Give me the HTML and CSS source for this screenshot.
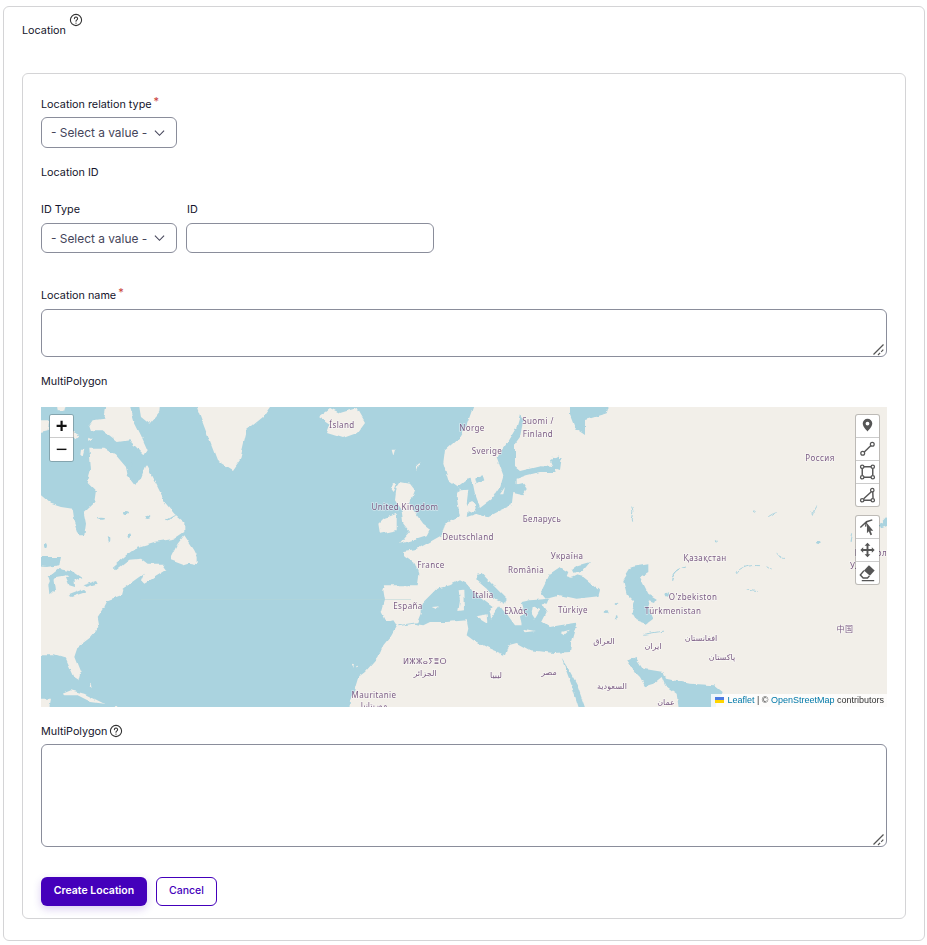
FILE: index.html
```html
<!DOCTYPE html>
<html lang="en">
<head>
<meta charset="utf-8">
<title>Location</title>
<link rel="stylesheet" href="styles.css">
</head>
<body>
<form class="outer">
  <div class="legend">
    <span class="legend-text">Location</span>
    <svg class="help help-top" viewBox="0 0 14 14"><circle cx="7" cy="7" r="5.6"/><path d="M5.4 5.6a1.6 1.6 0 1 1 2.5 1.3c-.6.4-.9.7-.9 1.3"/><path d="M7 10v.3"/></svg>
  </div>
  <div class="inner">
    <label class="lab">Location relation type<sup class="req">*</sup></label>
    <div class="select sel-a">
      <select><option>- Select a value -</option></select>
      <svg class="chev" viewBox="0 0 12 8"><path d="M1 1.5l5 5 5-5"/></svg>
    </div>
    <div class="lab lab-section">Location ID</div>
    <div class="id-row">
      <div class="id-col">
        <label class="lab">ID Type</label>
        <div class="select sel-b">
          <select><option>- Select a value -</option></select>
          <svg class="chev" viewBox="0 0 12 8"><path d="M1 1.5l5 5 5-5"/></svg>
        </div>
      </div>
      <div class="id-col">
        <label class="lab lab-id">ID</label>
        <input class="text" type="text">
      </div>
    </div>
    <label class="lab lab-name">Location name<sup class="req">*</sup></label>
    <div class="area-wrap area-name">
      <textarea class="area"></textarea>
      <svg class="grip" viewBox="0 0 16 16"><path d="M3.500 14.500L13.500 4.500"/><path d="M8 15l6-6" stroke-dasharray="3 1.500"/></svg>
    </div>
    <div class="lab lab-mp">MultiPolygon</div>

    <div class="map">
      <svg class="basemap" viewBox="0 0 846 300">
        <defs>
          <filter id="coast" filterUnits="userSpaceOnUse" x="-10" y="-10" width="866" height="320">
            <feTurbulence type="fractalNoise" baseFrequency=".11" numOctaves="3" seed="7" result="n"/>
            <feDisplacementMap in="SourceGraphic" in2="n" scale="4" xChannelSelector="R" yChannelSelector="G"/>
            <feGaussianBlur stdDeviation=".4"/>
          </filter>
        </defs>
        <rect class="water" width="846" height="300"/>
        <g filter="url(#coast)">
        <g transform="scale(.3333)">
          <path class="land" d="M-30,265L0,265 30,290 60,300 95,305 100,340 115,385 130,385 135,350 128,315 160,285 165,250 140,225 150,190 145,125 190,125 225,145 255,180 260,205 280,230 300,215 316,175 345,230 375,290 400,320 430,345 430,375 400,395 340,405 290,420 255,445 215,480 225,490 265,458 300,455 320,470 365,470 378,488 310,530 300,520 308,500 245,545 240,565 200,580 190,600 170,630 175,660 150,690 110,720 100,750 120,800 115,820 100,810 75,755 40,745 -30,745Z"/>
          <path class="land" d="M145,55L155,40 190,35 200,-30 260,-30 280,45 300,85 320,130 310,145 265,100 230,105 185,70 150,70Z"/>
          <path class="land" d="M290,-30L360,-30 355,15 325,50 300,30Z"/>
          <path class="land" d="M-30,40L25,40 20,70 -30,82Z"/>
          <path class="land" d="M45,-30L80,-30 70,14 50,12Z"/>
          <path class="land" d="M97,75L115,85 105,95 95,85Z"/>
          <path class="land" d="M120,125L130,125 125,146 118,140Z"/>
          <path class="land" d="M142,92L155,98 150,105 141,100Z"/>
          <path class="land" d="M390,450L410,410 430,385 460,430 470,450 470,475 445,470 430,475 390,460Z"/>
          <path class="land" d="M65,860L90,850 130,860 190,890 150,885 110,865 70,865Z"/>
          <path class="land" d="M205,930L225,893 250,930Z"/>
          <path class="land" d="M-30,875L30,875 20,930 -30,930Z"/>
          <path class="land" d="M145,825L150,830 152,842 146,838Z"/>
          <path class="water" d="M-30,450L60,450 55,475 20,480 -30,478Z"/>
          <path class="water" d="M20,510L50,485 100,495 122,510 105,518 75,505 45,510 30,525Z"/>
          <path class="water" d="M22,530L35,500 42,550 25,565Z"/>
          <path class="water" d="M75,510L100,505 102,540 85,535Z"/>
          <path class="water" d="M80,565L130,545 135,555 90,570Z"/>
          <path class="water" d="M125,535L165,522 170,530 135,540Z"/>
          <path class="water" d="M255,175L275,170 272,185 258,185Z"/>
          <path class="water" d="M375,340L410,320 405,325 380,345Z"/>
          <ellipse class="water" cx="255" cy="318" rx="9" ry="6"/>
          <ellipse class="water" cx="320" cy="328" rx="8" ry="5"/>
          <ellipse class="water" cx="180" cy="335" rx="12" ry="3"/>
          <ellipse class="water" cx="12" cy="416" rx="6" ry="8"/>
          <ellipse class="water" cx="205" cy="395" rx="3" ry="10"/>
          <ellipse class="water" cx="265" cy="385" rx="5" ry="6"/>
        </g>
        <g transform="translate(152,0) scale(.3333)">
          <path class="land" d="M0,-30L42,81 72,159 120,189 141,159 162,69 210,30 252,-30Z"/>
        </g>
        <path class="land" d="M277,10L289,1 299,6 316,1 324,15 316,26 302,31 286,26 289,18Z"/>
        <g transform="translate(319,0) scale(.3333)">
          <path class="land" d="M350,-30L320,55 300,90 255,130 250,170 265,220 290,238 300,245 290,270 295,300 300,330 255,350 245,385 200,410 165,430 130,435 130,445 135,450 165,470 175,500 170,535 75,535 70,550 75,580 65,615 80,645 100,640 110,655 90,690 70,715 55,750 15,795 -5,810 -20,860 -30,880 -35,950 1700,950 1700,-30Z"/>
          <path class="water" d="M290,238L320,215 335,212 345,260 360,300 400,270 420,240 430,205 410,150 440,110 470,60 480,25 490,40 480,90 465,110 465,180 480,192 540,178 585,180 590,195 540,195 500,205 470,215 470,235 490,230 500,245 490,262 460,255 455,295 420,310 380,330 350,320 320,330 325,300 320,290 325,248 305,250Z"/>
          <path class="land" d="M325,292L340,285 350,310 335,318 322,312Z"/>
          <path class="land" d="M420,262L435,240 430,262Z"/>
          <path class="water" d="M345,212L365,205 370,220 350,232Z"/>
          <path class="water" d="M570,160L595,145 600,185 580,186Z"/>
          <path class="land" d="M110,240L120,225 150,230 165,250 150,290 160,310 190,350 210,365 200,385 120,410 150,375 130,350 125,310 105,280Z"/>
          <path class="land" d="M70,335L110,320 110,370 60,380 55,350Z"/>
          <path class="land" d="M95,128L105,128 100,146Z"/>
          <path class="land" d="M170,172L178,168 172,190Z"/>
          <path class="land" d="M100,228L108,228 98,258 92,250Z"/>
        </g>
        <g transform="translate(419,-7) scale(.3333)">
          <path class="water" d="M330,-10L455,-10 440,40 375,60 375,105 345,85 330,45Z"/>
          <path class="water" d="M275,170L305,175 300,210 285,205Z"/>
          <path class="water" d="M1255,380L1300,330 1300,370 1265,385Z"/>
          <path class="river" d="M830,522C835,500 870,495 900,497"/>
          <path class="river" d="M920,500L935,510"/>
          <path class="river" d="M635,540C640,510 660,505 672,502"/>
          <path class="river" d="M860,570L890,575"/>
          <path class="river" d="M950,460C965,470 960,480 975,478"/>
          <path class="river" d="M1175,400L1170,425"/>
          <path class="river" d="M925,350L950,335"/>
          <path class="river" d="M880,330L890,335"/>
          <path class="river" d="M515,320C525,340 510,350 515,365"/>
          <path class="river" d="M1055,335C1060,350 1050,355 1070,320"/>
          <ellipse class="water" cx="1075" cy="427" rx="7" ry="5"/>
          <ellipse class="water" cx="770" cy="425" rx="3" ry="4"/>
          <ellipse class="water" cx="622" cy="582" rx="4" ry="7"/>
        </g>
        <g transform="translate(309,150) scale(.3333)">
          <path class="water" d="M145,208L190,200 220,205 240,195 290,195 350,190 355,215 350,235 370,250 420,275 465,295 475,265 500,258 540,280 570,283 610,288 660,285 665,250 680,197 630,205 600,210 575,195 590,165 575,140 600,125 540,130 515,135 525,170 510,178 515,205 495,205 470,170 450,145 435,165 420,185 418,165 428,150 400,130 370,105 350,80 330,70 300,85 260,95 215,140 215,170 205,195 145,205Z"/>
          <path class="water" d="M378,50L395,48 425,80 470,125 465,140 435,125 410,95 380,70Z"/>
          <path class="land" d="M380,178L410,172 412,197Z"/>
          <path class="land" d="M326,100L340,98 342,160 325,162 330,130Z"/>
          <path class="land" d="M245,150L270,148 258,156Z"/>
          <path class="land" d="M520,215L555,222 525,226Z"/>
          <path class="land" d="M635,225L660,218 645,232Z"/>
          <path class="land" d="M548,150L570,160 555,185 545,170Z"/>
          <path class="land" d="M5,325L12,322 10,332Z"/>
          <path class="land" d="M18,328L24,326 22,334Z"/>
        </g>
        <g transform="translate(499,150) scale(.3333)">
          <path class="water" d="M3,105L30,50 60,30 85,45 80,58 95,62 110,55 130,60 180,100 175,118 110,125 60,115 20,125Z"/>
          <path class="water" d="M95,40L115,25 150,15 125,45 100,50Z"/>
          <path class="water" d="M0,130L25,128 20,140 0,136Z"/>
          <path class="water" d="M250,70L275,30 325,22 325,45 300,60 325,110 350,125 345,135 330,130 325,150 340,185 320,200 290,190 275,165 285,135 260,110Z"/>
          <path class="water" d="M65,305L85,335 110,380 145,480 125,480 95,385 80,345Z"/>
          <path class="water" d="M262,310L285,298 310,335 370,345 378,365 450,380 520,385 545,405 515,480 420,480 410,410 375,385 365,360 340,380 315,388 300,360 285,345Z"/>
          <ellipse class="water" cx="198" cy="167" rx="8" ry="4"/>
          <ellipse class="water" cx="230" cy="182" rx="3" ry="8"/>
          <ellipse class="water" cx="228" cy="138" rx="4" ry="3"/>
          <ellipse class="water" cx="382" cy="112" rx="5" ry="7"/>
          <path class="river" d="M395,65C400,40 420,35 435,30"/>
          <path class="river" d="M310,232L372,222"/>
        </g>
        </g>
        <rect class="seam" x="100" y="192" width="270" height="1"/>
        <g class="labels">
          <text x="301" y="21">Ísland</text>
          <text x="431" y="24">Norge</text>
          <text x="497" y="17">Suomi /</text>
          <text x="497" y="30">Finland</text>
          <text x="446" y="47">Sverige</text>
          <text x="364" y="103">United Kingdom</text>
          <text x="427" y="133">Deutschland</text>
          <text x="501" y="115">Беларусь</text>
          <text x="526" y="152">Україна</text>
          <text x="664" y="154">Қазақстан</text>
          <text x="779" y="54">Россия</text>
          <text x="390" y="161">France</text>
          <text x="485" y="166">România</text>
          <text x="367" y="202">España</text>
          <text x="442" y="191">Italia</text>
          <text x="475" y="207">Ελλάς</text>
          <text x="532" y="206">Türkiye</text>
          <text x="652" y="193">O'zbekiston</text>
          <text x="632" y="207">Türkmenistan</text>
          <text class="cjk" x="804" y="225">中国</text>
          <text x="384" y="257">ⵍⵣⵣⴰⵢⴻⵔ</text>
          <text x="384" y="269">الجزائر</text>
          <text x="333" y="291">Mauritanie</text>
          <text x="333" y="301">موريتانيا</text>
          <text x="455" y="271">ليبيا</text>
          <text x="508" y="268">مصر</text>
          <text x="563" y="237">العراق</text>
          <text x="612" y="242">ايران</text>
          <text x="660" y="234">افغانستان</text>
          <text x="681" y="253">پاکستان</text>
          <text x="571" y="282">السعودية</text>
          <text x="625" y="298">عمان</text>
          <text class="end" x="846" y="149">Монгол</text>
          <text class="start" x="809" y="162">Улс</text>
        </g>
      </svg>

      <div class="zoom">
        <a class="zoom-btn zoom-in">+</a>
        <a class="zoom-btn zoom-out">−</a>
      </div>

      <div class="tools">
        <div class="tool-group">
          <a class="tool"><svg viewBox="0 0 24 23"><path class="fill" fill-rule="evenodd" d="M12 4a5 5 0 0 0-5 5c0 3.6 5 8.200 5 8.200s5-4.600 5-8.200a5 5 0 0 0-5-5zm0 3a2 2 0 1 1 0 4 2 2 0 0 1 0-4z"/></svg></a>
          <a class="tool"><svg viewBox="0 0 24 23"><path class="ln ln-b" d="M8.400 14.800L15.600 7.800"/><circle class="ln" cx="7" cy="16" r="2"/><circle class="ln" cx="17" cy="6.500" r="2"/></svg></a>
          <a class="tool"><svg viewBox="0 0 24 23"><path class="ln ln-b" d="M6.500 8v7M17.500 8v7M8 6h8M8 17h8"/><circle class="ln" cx="6.500" cy="6" r="1.800"/><circle class="ln" cx="17.500" cy="6" r="1.800"/><circle class="ln" cx="6.500" cy="17" r="1.800"/><circle class="ln" cx="17.500" cy="17" r="1.800"/></svg></a>
          <a class="tool"><svg viewBox="0 0 24 23"><path class="ln ln-b" d="M8 15.500L16 8M8 17h8M17.500 8l.3 7"/><circle class="ln" cx="6.500" cy="17" r="1.800"/><circle class="ln" cx="17.500" cy="17" r="1.800"/><circle class="ln" cx="17" cy="6.500" r="1.800"/></svg></a>
        </div>
        <div class="tool-group">
          <a class="tool"><svg viewBox="0 0 24 23"><path class="ln ln-b" d="M4.500 12l6.500-6 6-2M11 6l-1 5"/><path class="fill" d="M11.500 7.500l6.500 8-2.900-.2 1.700 4-1.700.7-1.700-4-2 2z"/></svg></a>
          <a class="tool"><svg viewBox="0 0 24 23"><path class="fill" d="M12 4l3 3h-2v3.500h3.500v-2l3 3-3 3v-2H13V16h2l-3 3-3-3h2v-3.500H7.500v2l-3-3 3-3v2H11V7H9z"/></svg></a>
          <a class="tool"><svg viewBox="0 0 24 23"><path class="fill" d="M13.500 3.500l6 5.500-5 5.500-6.200-5.500z"/><path class="ln ln-b" d="M8.300 9l-3.800 4.500 3 3.300h4.500l2-2.300M6 19.500h13"/></svg></a>
        </div>
      </div>

      <div class="attribution">
        <svg class="flag" viewBox="0 0 12 8"><rect width="12" height="4" fill="#4C7BE1"/><rect y="4" width="12" height="4" fill="#FFD500"/></svg>
        <a class="attr-link">Leaflet</a> <span class="sep">|</span> © <a class="attr-link">OpenStreetMap</a> contributors
      </div>
    </div>

    <div class="lab lab-mp2">MultiPolygon
      <svg class="help help-inline" viewBox="0 0 14 14"><circle cx="7" cy="7" r="5.6"/><path d="M5.4 5.6a1.6 1.6 0 1 1 2.5 1.3c-.6.4-.9.7-.9 1.3"/><path d="M7 10v.3"/></svg>
    </div>
    <div class="area-wrap area-geo">
      <textarea class="area"></textarea>
      <svg class="grip" viewBox="0 0 16 16"><path d="M3.500 14.500L13.500 4.500"/><path d="M8 15l6-6" stroke-dasharray="3 1.500"/></svg>
    </div>
    <div class="actions">
      <button type="button" class="btn btn-primary">Create Location</button>
      <button type="button" class="btn btn-ghost">Cancel</button>
    </div>
  </div>
</form>
</body>
</html>
```
FILE: styles.css
```css
* { box-sizing: border-box; }
html, body { background: #fff; }
body {
  margin: 0;
  padding: 6px 2px 0 3px;
  font-family: Inter, "Liberation Sans", sans-serif;
  font-size: 10.8px;
  color: #14142b;
}
.outer {
  display: block;
  width: 922px;
  height: 935px;
  border: 1px solid #d4d4d6;
  border-radius: 6px;
  padding: 7px 18px 0;
}
.legend { display: flex; height: 23px; margin-bottom: 36px; }
.legend-text { align-self: flex-end; height: 14px; line-height: 16px; font-size: 10.8px; }
.help { fill: none; stroke: #333; stroke-width: 1.1; stroke-linecap: round; }
.help-top { width: 14px; height: 14px; margin-left: 3px; margin-top: -1px; }
.inner {
  border: 1px solid #d4d4d6;
  border-radius: 6px;
  width: 884px;
  height: 846px;
  padding: 22px 18px 0;
}
.lab { display: block; height: 16px; line-height: 18px; font-size: 10.8px; font-weight: 400; color: #14142b; }
.req { color: #c9403a; font-size: 11px; line-height: 0; vertical-align: 3px; margin-left: 2px; }
.select { position: relative; width: 136px; }
.sel-a { height: 31px; margin-top: 5px; }
.sel-b { height: 30px; margin-top: 6px; }
.select select {
  appearance: none;
  display: block;
  width: 100%;
  height: 100%;
  padding: 0 0 0 9px;
  border: 1px solid #8a8d9b;
  border-radius: 6px;
  background: #fff;
  font: 400 11.9px Inter, "Liberation Sans", sans-serif;
  color: #45455a;
}
.chev { position: absolute; right: 12px; top: 50%; width: 11px; height: 8px; margin-top: -4px; fill: none; stroke: #45455a; stroke-width: 1.2; }
.lab-section { margin-top: 16px; }
.id-row { display: flex; gap: 9px; margin-top: 21px; }
.lab-id { padding-left: 1px; }
.text {
  display: block;
  width: 248px;
  height: 30px;
  margin-top: 6px;
  border: 1px solid #8a8d9b;
  border-radius: 6px;
  background: #fff;
}
.lab-name { margin-top: 34px; }
.area-wrap { position: relative; width: 846px; }
.area {
  display: block;
  width: 100%;
  height: 100%;
  resize: none;
  border: 1px solid #8a8d9b;
  border-radius: 6px;
  background: #fff;
}
.grip { position: absolute; right: 1px; bottom: 1px; width: 16px; height: 16px; fill: none; stroke: #555; stroke-width: 1.2; }
.area-name { height: 48px; margin-top: 6px; }
.lab-mp { margin-top: 16px; }
.map { position: relative; width: 846px; height: 300px; margin-top: 18px; overflow: hidden; font-family: "Liberation Sans", sans-serif; }
.basemap { display: block; width: 846px; height: 300px; }
.water { fill: #aad3df; }
.land { fill: #f2efe9; }
.river { fill: none; stroke: #aad3df; stroke-width: 3; }
.seam { fill: #b4d6d8; opacity: .5; }
.labels text {
  font: 8px "Noto Sans", "DejaVu Sans", sans-serif;
  letter-spacing: .4px;
  fill: #7b5c84;
  text-anchor: middle;
  stroke: #fff;
  stroke-opacity: .45;
  stroke-width: 1.5px;
  paint-order: stroke;
}
.labels .cjk { font-family: "Noto Sans CJK SC", sans-serif; }
.labels .end { text-anchor: end; }
.labels .start { text-anchor: start; }
.zoom {
  position: absolute;
  left: 9px;
  top: 8px;
  width: 23px;
  border-radius: 2px;
  background: #fff;
  box-shadow: 0 0 0 1px rgba(0,0,0,.22);
}
.zoom-btn { display: block; height: 23px; text-align: center; color: #111; background: #fff; font: 700 20px/22px "Liberation Sans", sans-serif; border-radius: 2px 2px 0 0; }
.zoom-in { border-bottom: 1px solid #ccc; }
.zoom-out { font-weight: 400; border-radius: 0 0 2px 2px; }
.tools { position: absolute; left: 815px; top: 8px; display: flex; flex-direction: column; gap: 10px; }
.tool-group { width: 23px; border-radius: 2px; background: #fff; box-shadow: 0 0 0 1px rgba(0,0,0,.22); }
.tool { display: block; height: 23px; border-bottom: 1px solid #ccc; }
.tool:last-child { height: 22px; border-bottom: 0; }
.tool svg { display: block; width: 23px; height: 22px; }
.fill { fill: #555; }
.ln { fill: none; stroke: #555; stroke-width: 1.3; }
.ln-b { stroke-width: 1.5; }
.attribution {
  position: absolute;
  right: 0;
  bottom: 0;
  height: 13px;
  padding: 0 3px 0 4px;
  background: rgba(255,255,255,.8);
  font-size: 9px;
  line-height: 13px;
  color: #333;
  white-space: nowrap;
}
.attr-link { color: #0078a8; }
.flag { width: 9px; height: 6px; margin-right: 1px; }
.lab-mp2 { display: flex; align-items: flex-start; gap: 2px; margin-top: 16px; }
.help-inline { width: 14px; height: 14px; margin-top: 1px; }
.area-geo { height: 103px; margin-top: 5px; }
.actions { display: flex; gap: 9px; margin-top: 30px; }
.btn { height: 29px; border-radius: 6px; font: 600 10.5px Inter, "Liberation Sans", sans-serif; padding: 0 0 3px; }
.btn-primary { width: 106px; border: 0; background: #4400bb; color: #fff; box-shadow: 0 3px 8px rgba(68,0,187,.2); }
.btn-ghost { width: 61px; border: 1px solid #4400bb; background: #fff; color: #4400bb; font-weight: 500; }
```
